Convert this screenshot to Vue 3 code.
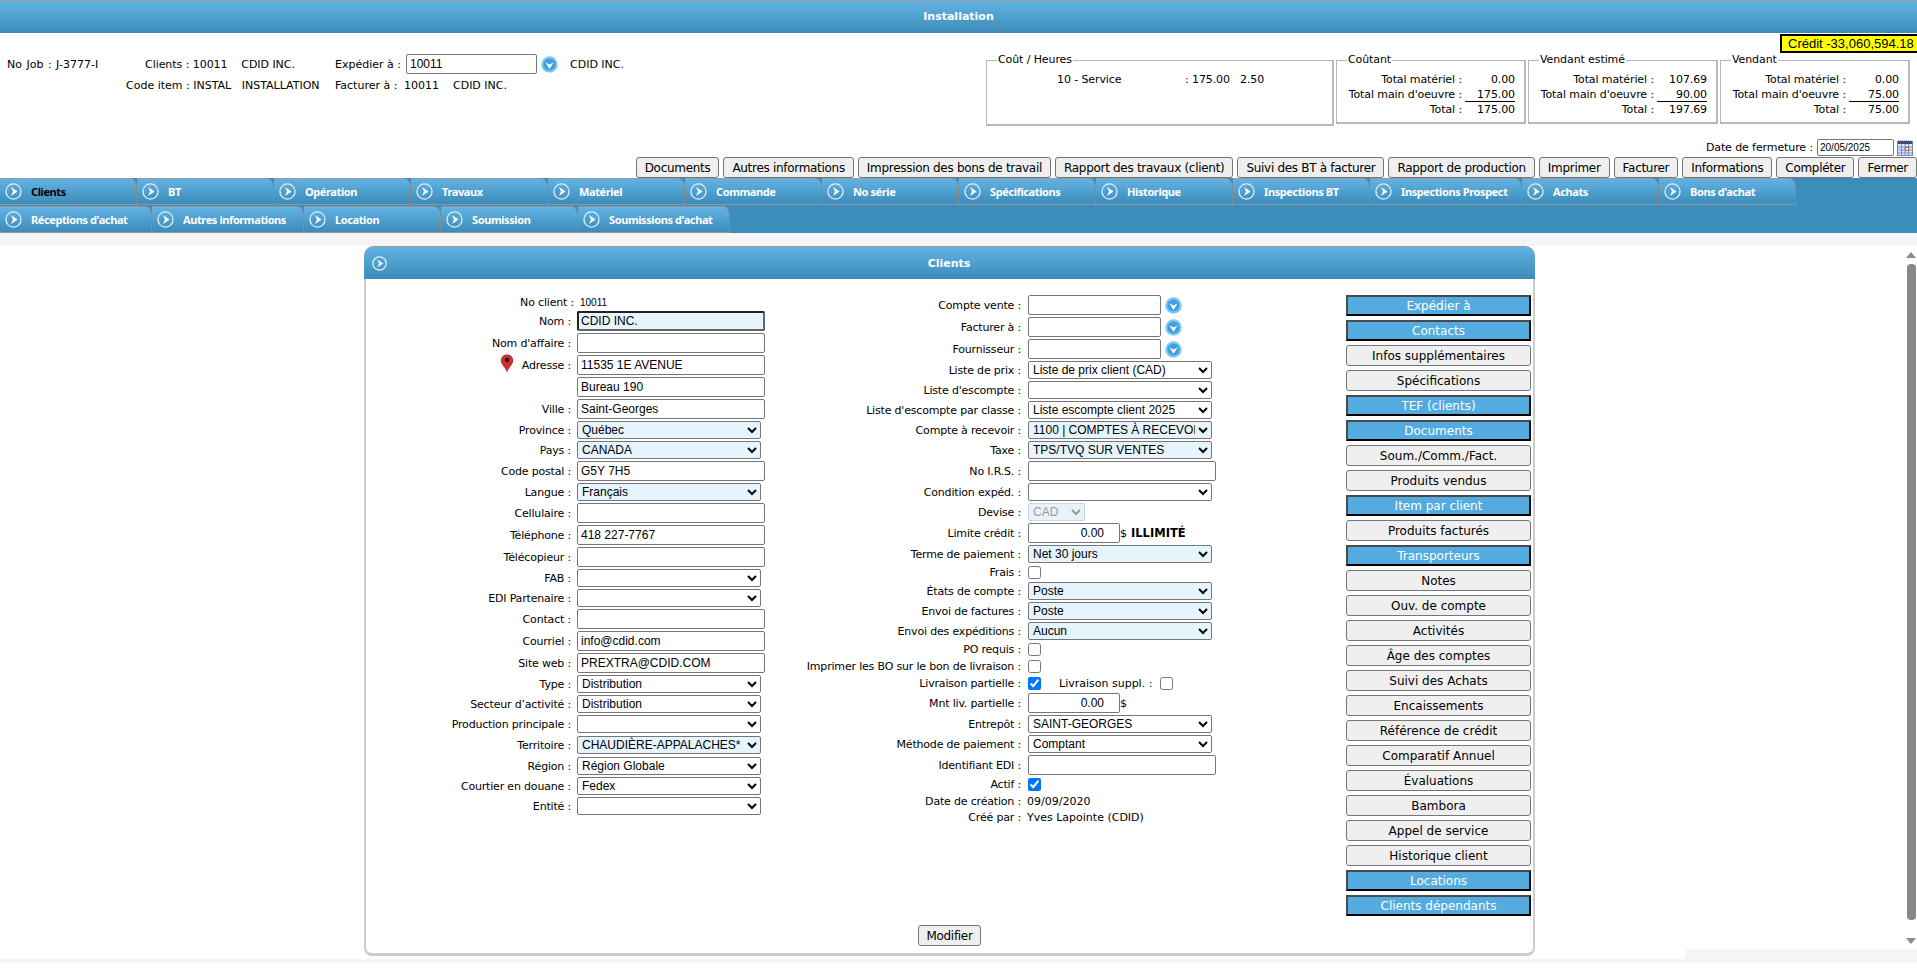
<template>
  <div class="page">
    <header class="top-bar">Installation</header>

    <section class="info">
      <div class="credit">Crédit -33,060,594.18</div>
      <div class="job">
        <span class="no-job">No Job : J-3777-I</span>
        <div class="job-lines">
          <div class="job-line line-a">
            <span class="clients">Clients : 10011 &nbsp;&nbsp; CDID INC.</span>
            <span class="exp-label">Expédier à :</span>
            <input class="field exp-input" value="10011" />
            <svg class="drop-icon" viewBox="0 0 17 17">
              <circle cx="8.5" cy="8.5" r="8.2" fill="#7cc8f0" />
              <circle cx="8.5" cy="8.5" r="6" fill="#3f9edb" />
              <path d="M4.300 6.200 8.500 13 12.700 6.200 8.500 8.400z" fill="#fff" />
            </svg>
            <span class="exp-name">CDID INC.</span>
          </div>
          <div class="job-line line-b">
            <span class="item">Code item : INSTAL &nbsp; INSTALLATION</span>
            <span class="exp-label fact">Facturer à :</span>
            <span>10011 &nbsp;&nbsp; CDID INC.</span>
          </div>
        </div>
      </div>

      <div class="boxes">
        <fieldset class="box hours">
          <legend>Coût / Heures</legend>
          <div class="hours-row">
            <span class="h-name">10 - Service</span>
            <span class="h-rate">: 175.00</span>
            <span>2.50</span>
          </div>
        </fieldset>
        <fieldset v-for="b in totals" :key="b.title" class="box total">
          <legend>{{ b.title }}</legend>
          <div class="t-row"><span class="t-l">Total matériel :</span><span class="t-v">{{ b.mat }}</span></div>
          <div class="t-row"><span class="t-l">Total main d'oeuvre :</span><span class="t-v under">{{ b.work }}</span></div>
          <div class="t-row"><span class="t-l">Total :</span><span class="t-v">{{ b.total }}</span></div>
        </fieldset>
      </div>

      <div class="closing">
        <span>Date de fermeture :</span>
        <input class="field date-input" value="20/05/2025" />
        <svg class="cal" viewBox="0 0 16 16">
          <rect x="0.5" y="1.500" width="15" height="14" fill="#dfe9f7" stroke="#6f86ad" />
          <rect x="1" y="1" width="14" height="3" fill="#3d4f73" />
          <path d="M1 0.500h14" stroke="#9aa5b8" stroke-dasharray="1 1" />
          <path d="M1 7h14M1 10h14M1 13h14M4.500 4v11M8 4v11M11.500 4v11" stroke="#6f93d0" stroke-width="1" />
          <rect x="8.500" y="7.500" width="3" height="3" fill="#fff" stroke="#e2502a" />
        </svg>
      </div>

      <div class="actions">
        <button v-for="a in actions" :key="a" class="act">{{ a }}</button>
      </div>
    </section>

    <nav class="tabs">
      <div v-for="(row, i) in tabRows" :key="i" class="tab-row">
        <div v-for="t in row" :key="t" class="tab" :class="{ active: t === 'Clients', wide: wideTabs.includes(t) }">
          <svg class="go-icon" viewBox="0 0 18 18">
            <circle cx="9" cy="9" r="8" fill="none" stroke="#dceefa" stroke-width="1.400" />
            <path d="M6.300 4.300 13.300 9l-7 4.700L8.500 9z" fill="#fff" />
          </svg>
          <span>{{ t }}</span>
        </div>
      </div>
    </nav>
    <div class="strip"></div>

    <div class="content">
      <section class="panel">
        <div class="panel-head">
          <svg class="go-icon small" viewBox="0 0 18 18">
            <circle cx="9" cy="9" r="8" fill="none" stroke="#dceefa" stroke-width="1.600" />
            <path d="M6.300 4.300 13.300 9l-7 4.700L8.500 9z" fill="#fff" />
          </svg>
          <span class="panel-title">Clients</span>
        </div>

        <div class="panel-body">
          <div class="col left">
            <div v-for="r in leftRows" :key="r.label" class="row" :class="'h-' + r.type">
              <span class="lbl" :class="{ shifted: r.type === 'text' }">
                <svg v-if="r.pin" class="pin" viewBox="0 0 14 20">
                  <path d="M7 0.500C3.300 0.500 0.800 3.200 0.800 6.500 0.800 10.500 5 13 7 18.500 9 13 13.200 10.500 13.200 6.500 13.200 3.200 10.700 0.500 7 0.500z" fill="#c9302c" />
                  <circle cx="7" cy="6" r="2.200" fill="#2a1010" />
                </svg>
                {{ r.label }}
              </span>
              <span v-if="r.type === 'text'" class="small-val">{{ r.value }}</span>
              <input v-else-if="r.type === 'input'" class="field wide" :class="{ req: r.req, focus: r.focus }" :value="r.value" />
              <select v-else class="sel" :class="{ req: r.req }">
                <option>{{ r.value }}</option>
              </select>
            </div>
          </div>

          <div class="col middle">
            <div v-for="r in midRows" :key="r.label" class="row" :class="'h-' + r.type">
              <span class="lbl">{{ r.label }}</span>
              <template v-if="r.type === 'lookup'">
                <input class="field short" />
                <svg class="drop-icon" viewBox="0 0 17 17">
                  <circle cx="8.5" cy="8.5" r="8.2" fill="#7cc8f0" />
                  <circle cx="8.5" cy="8.5" r="6" fill="#3f9edb" />
                  <path d="M4.300 6.200 8.500 13 12.700 6.200 8.500 8.400z" fill="#fff" />
                </svg>
              </template>
              <input v-else-if="r.type === 'input'" class="field mid-wide" :value="r.value" />
              <template v-else-if="r.type === 'money'">
                <input class="field money" :value="r.value" />
                <span class="dollar">$</span>
                <b v-if="r.note" class="note">{{ r.note }}</b>
              </template>
              <select v-else-if="r.type === 'select'" class="sel mid" :class="{ req: r.req }">
                <option>{{ r.value }}</option>
              </select>
              <select v-else-if="r.type === 'disabled'" class="sel devise" disabled>
                <option>{{ r.value }}</option>
              </select>
              <template v-else-if="r.type === 'check'">
                <input type="checkbox" class="cb" :checked="r.checked" />
                <template v-if="r.extra">
                  <span class="extra">{{ r.extra }}</span>
                  <input type="checkbox" class="cb" />
                </template>
              </template>
              <span v-else class="plain">{{ r.value }}</span>
            </div>
          </div>

          <div class="col side">
            <button v-for="s in sideButtons" :key="s.t" class="side-btn" :class="{ on: s.on }">{{ s.t }}</button>
          </div>
        </div>

        <div class="panel-foot">
          <button class="act modify">Modifier</button>
        </div>
      </section>

      <div class="gutter">
        <div class="scroll">
          <span class="arrow up"></span>
          <span class="thumb"></span>
          <span class="arrow down"></span>
        </div>
        <div class="corner"></div>
      </div>
    </div>
    <div class="bottom-strip"></div>
  </div>
</template>

<script setup>
const totals = [
  { title: 'Coûtant', mat: '0.00', work: '175.00', total: '175.00' },
  { title: 'Vendant estimé', mat: '107.69', work: '90.00', total: '197.69' },
  { title: 'Vendant', mat: '0.00', work: '75.00', total: '75.00' },
]

const actions = [
  'Documents',
  'Autres informations',
  'Impression des bons de travail',
  'Rapport des travaux (client)',
  'Suivi des BT à facturer',
  'Rapport de production',
  'Imprimer',
  'Facturer',
  'Informations',
  'Compléter',
  'Fermer',
]

const tabRows = [
  ['Clients', 'BT', 'Opération', 'Travaux', 'Matériel', 'Commande', 'No série', 'Spécifications', 'Historique', 'Inspections BT', 'Inspections Prospect', 'Achats', "Bons d'achat"],
  ["Réceptions d'achat", 'Autres informations', 'Location', 'Soumission', "Soumissions d'achat"],
]
const wideTabs = ['Inspections Prospect', "Réceptions d'achat", 'Autres informations', "Soumissions d'achat"]

const leftRows = [
  { label: 'No client :', type: 'text', value: '10011' },
  { label: 'Nom :', type: 'input', value: 'CDID INC.', req: true, focus: true },
  { label: "Nom d'affaire :", type: 'input', value: '' },
  { label: 'Adresse :', type: 'input', value: '11535 1E AVENUE', pin: true },
  { label: '', type: 'input', value: 'Bureau 190' },
  { label: 'Ville :', type: 'input', value: 'Saint-Georges' },
  { label: 'Province :', type: 'select', value: 'Québec', req: true },
  { label: 'Pays :', type: 'select', value: 'CANADA', req: true },
  { label: 'Code postal :', type: 'input', value: 'G5Y 7H5' },
  { label: 'Langue :', type: 'select', value: 'Français', req: true },
  { label: 'Cellulaire :', type: 'input', value: '' },
  { label: 'Téléphone :', type: 'input', value: '418 227-7767' },
  { label: 'Télécopieur :', type: 'input', value: '' },
  { label: 'FAB :', type: 'select', value: '' },
  { label: 'EDI Partenaire :', type: 'select', value: '' },
  { label: 'Contact :', type: 'input', value: '' },
  { label: 'Courriel :', type: 'input', value: 'info@cdid.com' },
  { label: 'Site web :', type: 'input', value: 'PREXTRA@CDID.COM' },
  { label: 'Type :', type: 'select', value: 'Distribution' },
  { label: 'Secteur d’activité :', type: 'select', value: 'Distribution' },
  { label: 'Production principale :', type: 'select', value: '' },
  { label: 'Territoire :', type: 'select-tall', value: 'CHAUDIÈRE-APPALACHES*', req: true },
  { label: 'Région :', type: 'select', value: 'Région Globale' },
  { label: 'Courtier en douane :', type: 'select', value: 'Fedex' },
  { label: 'Entité :', type: 'select', value: '' },
]

const midRows = [
  { label: 'Compte vente :', type: 'lookup' },
  { label: 'Facturer à :', type: 'lookup' },
  { label: 'Fournisseur :', type: 'lookup' },
  { label: 'Liste de prix :', type: 'select', value: 'Liste de prix client (CAD)' },
  { label: "Liste d'escompte :", type: 'select', value: '' },
  { label: "Liste d'escompte par classe :", type: 'select', value: 'Liste escompte client 2025' },
  { label: 'Compte à recevoir :', type: 'select', value: '1100 | COMPTES À RECEVOIR', req: true },
  { label: 'Taxe :', type: 'select', value: 'TPS/TVQ SUR VENTES', req: true },
  { label: 'No I.R.S. :', type: 'input', value: '' },
  { label: 'Condition expéd. :', type: 'select', value: '' },
  { label: 'Devise :', type: 'disabled', value: 'CAD' },
  { label: 'Limite crédit :', type: 'money', value: '0.00', note: 'ILLIMITÉ' },
  { label: 'Terme de paiement :', type: 'select', value: 'Net 30 jours', req: true },
  { label: 'Frais :', type: 'check' },
  { label: 'États de compte :', type: 'select', value: 'Poste', req: true },
  { label: 'Envoi de factures :', type: 'select', value: 'Poste', req: true },
  { label: 'Envoi des expéditions :', type: 'select', value: 'Aucun', req: true },
  { label: 'PO requis :', type: 'check' },
  { label: 'Imprimer les BO sur le bon de livraison :', type: 'check' },
  { label: 'Livraison partielle :', type: 'check', checked: true, extra: 'Livraison suppl. :' },
  { label: 'Mnt liv. partielle :', type: 'money', value: '0.00' },
  { label: 'Entrepôt :', type: 'select', value: 'SAINT-GEORGES' },
  { label: 'Méthode de paiement :', type: 'select', value: 'Comptant' },
  { label: 'Identifiant EDI :', type: 'input', value: '' },
  { label: 'Actif :', type: 'check', checked: true },
  { label: 'Date de création :', type: 'plain', value: '09/09/2020' },
  { label: 'Créé par :', type: 'plain', value: 'Yves Lapointe (CDID)' },
]

const sideButtons = [
  { t: 'Expédier à', on: true },
  { t: 'Contacts', on: true },
  { t: 'Infos supplémentaires' },
  { t: 'Spécifications' },
  { t: 'TEF (clients)', on: true },
  { t: 'Documents', on: true },
  { t: 'Soum./Comm./Fact.' },
  { t: 'Produits vendus' },
  { t: 'Item par client', on: true },
  { t: 'Produits facturés' },
  { t: 'Transporteurs', on: true },
  { t: 'Notes' },
  { t: 'Ouv. de compte' },
  { t: 'Activités' },
  { t: 'Âge des comptes' },
  { t: 'Suivi des Achats' },
  { t: 'Encaissements' },
  { t: 'Référence de crédit' },
  { t: 'Comparatif Annuel' },
  { t: 'Évaluations' },
  { t: 'Bambora' },
  { t: 'Appel de service' },
  { t: 'Historique client' },
  { t: 'Locations', on: true },
  { t: 'Clients dépendants', on: true },
]
</script>

<style>
html,
body {
  margin: 0;
  background: #fff;
  overflow: hidden;
}
</style>

<style scoped>
* {
  box-sizing: border-box;
}

.page {
  width: 1917px;
  height: 972px;
  overflow: hidden;
  font-family: 'DejaVu Sans', sans-serif;
  font-size: 11px;
  color: #000;
  background: #fff;
}

.top-bar {
  height: 33px;
  border-top: 1px solid #9a9a9a;
  background: linear-gradient(#62b3e4, #3c8bb9);
  color: #fff;
  font-weight: bold;
  font-size: 11px;
  line-height: 32px;
  text-align: center;
}

.info {
  position: relative;
  height: 145px;
  display: flex;
  flex-direction: column;
}
.credit {
  position: absolute;
  top: 1px;
  right: 0;
  width: 137px;
  height: 19px;
  background: #ff0;
  border: 2px solid #000;
  border-right: none;
  font-size: 13px;
  line-height: 15px;
  padding-left: 6px;
  white-space: nowrap;
  overflow: hidden;
  font-family: 'Liberation Sans', sans-serif;
}
.job {
  position: absolute;
  top: 21px;
  left: 7px;
  display: flex;
}
.no-job {
  width: 119px;
  margin-top: 4px;
  word-spacing: 1px;
}
.job-line {
  display: flex;
  align-items: center;
  white-space: nowrap;
}
.line-a {
  height: 20px;
}
.line-b {
  height: 20px;
  margin-top: 1px;
}
.clients {
  margin-left: 19px;
  width: 190px;
  letter-spacing: -0.05px;
}
.item {
  width: 209px;
}
.exp-label {
  width: 71px;
}
.exp-label.fact {
  width: 69px;
}
.exp-input {
  width: 131px;
}
.exp-name {
  margin-left: 12px;
}

.field {
  height: 20px;
  border: 1px solid #767676;
  border-radius: 2px;
  background: #fff;
  padding: 0 3px;
  font-family: 'Liberation Sans', sans-serif;
  font-size: 12px;
  color: #000;
  outline: none;
}
.drop-icon {
  width: 17px;
  height: 17px;
  margin-left: 4px;
  flex: none;
}

.boxes {
  position: absolute;
  top: 20px;
  left: 986px;
  display: flex;
  gap: 2px;
}
.box {
  margin: 0;
  padding: 0;
  min-width: 0;
  border: 1px solid #b8b8b8;
  border-bottom-width: 2px;
  border-right-width: 2px;
  height: 71px;
  position: relative;
  letter-spacing: -0.1px;
}
.box legend {
  padding: 0 1px;
  margin-left: 10px;
  line-height: 14px;
}
.hours {
  width: 348px;
  height: 73px;
}
.hours-row {
  display: flex;
  line-height: 15px;
  margin-top: 5px;
  padding-left: 70px;
}
.h-name {
  width: 128px;
}
.h-rate {
  width: 55px;
}
.total {
  width: 190px;
}
.t-row {
  display: flex;
  justify-content: flex-end;
  height: 15px;
  line-height: 15px;
  padding-right: 9px;
}
.t-row:first-of-type {
  margin-top: 5px;
}
.t-l {
  flex: 1;
  text-align: right;
}
.t-v {
  width: 50px;
  margin-left: 3px;
  text-align: right;
}
.under {
  border-bottom: 1px solid #000;
}

.closing {
  position: absolute;
  top: 106px;
  right: 4px;
  display: flex;
  align-items: center;
  gap: 4px;
  letter-spacing: -0.1px;
}
.date-input {
  width: 77px;
  height: 17px;
  font-size: 10px;
  padding: 0 2px;
}
.cal {
  width: 16px;
  height: 16px;
  margin-left: -1px;
}

.actions {
  position: absolute;
  top: 124px;
  right: 0;
  display: flex;
  gap: 4px;
}
.act {
  height: 21px;
  padding: 0 8px;
  background: #efefef;
  border: 1px solid #767676;
  border-radius: 3px;
  font-family: 'DejaVu Sans', sans-serif;
  font-size: 12px;
  letter-spacing: -0.3px;
  color: #000;
  white-space: nowrap;
}

.tabs {
  background: #3d8dbb;
  height: 55px;
}
.tab-row {
  display: flex;
  height: 27px;
}
.tab-row + .tab-row {
  margin-top: 1px;
}
.tab {
  width: 137px;
  flex: none;
  display: flex;
  align-items: center;
  gap: 9px;
  padding-left: 5px;
  border-top: 1px solid #999;
  border-right: 1px solid #8a8a8a;
  border-bottom: 1px solid #8a9aa5;
  border-top-right-radius: 8px;
  background: linear-gradient(#62b3e4, #3c8bb9);
  color: #fff;
  font-family: 'Noto Sans', sans-serif;
  font-weight: bold;
  font-size: 11px;
  letter-spacing: -0.4px;
  white-space: nowrap;
}
.tab.wide {
  width: 152px;
}
.tab.active {
  color: #000;
}
.go-icon {
  width: 17px;
  height: 17px;
  flex: none;
}
.go-icon.small {
  width: 15px;
  height: 15px;
}

.strip {
  height: 13px;
  background: #f5f5f5;
}

.content {
  display: flex;
  height: 713px;
  padding-left: 364px;
}
.panel {
  width: 1171px;
  height: 710px;
  display: flex;
  flex-direction: column;
  border-left: 2px solid #ccc;
  border-right: 2px solid #ccc;
  border-bottom: 3px solid #ccc;
  border-radius: 10px 10px 8px 8px;
  background: #fff;
}
.panel-head {
  position: relative;
  height: 33px;
  margin: 0 -2px;
  display: flex;
  align-items: center;
  padding-left: 8px;
  border-top: 1px solid #999;
  border-radius: 10px 10px 0 0;
  background: linear-gradient(#62b3e4, #3c8bb9);
}
.panel-title {
  flex: 1;
  text-align: center;
  padding-right: 24px;
  color: #fff;
  font-weight: bold;
  font-size: 11px;
}
.panel-body {
  display: flex;
  height: 646px;
  padding-top: 15px;
}
.col.left {
  width: 404px;
}
.col.middle {
  width: 576px;
}
.col.side {
  width: 185px;
  display: flex;
  flex-direction: column;
  gap: 4px;
  margin-top: 1px;
}
.row {
  display: flex;
  align-items: center;
  white-space: nowrap;
}
.h-text {
  height: 16px;
}
.h-input,
.h-lookup,
.h-money,
.h-select-tall {
  height: 22px;
}
.h-select,
.h-disabled {
  height: 20px;
}
.h-check {
  height: 17px;
}
.h-plain {
  height: 16px;
}
.lbl {
  flex: none;
  text-align: right;
  position: relative;
  letter-spacing: -0.18px;
}
.left .lbl {
  width: 205px;
  margin-right: 6px;
}
.middle .lbl {
  width: 251px;
  margin-right: 7px;
}
.left .lbl.shifted {
  width: 208px;
  margin-right: 6px;
}
.pin {
  position: absolute;
  left: 134px;
  top: -5px;
  width: 14px;
  height: 20px;
}
.small-val {
  font-family: 'Liberation Sans', sans-serif;
  font-size: 10px;
}
.plain {
  margin-left: -1px;
}
.wide {
  width: 188px;
}
.short {
  width: 133px;
}
.mid-wide {
  width: 188px;
}
.money {
  width: 92px;
  text-align: right;
  padding-right: 15px;
}
.dollar {
  margin-left: 0;
}
.note {
  margin-left: 4px;
  font-size: 11.5px;
}
.req {
  background-color: #e6f4fd;
}
.focus {
  border: 2px solid;
  border-color: #222 #666 #666 #222;
  padding: 0 2px;
}
.sel {
  height: 18px;
  width: 184px;
  border: 1px solid #767676;
  border-radius: 2px;
  padding: 0;
  font-family: 'Liberation Sans', sans-serif;
  font-size: 12px;
  color: #000;
  background-color: #fff;
}
.sel.req {
  background-color: #e6f4fd;
}
.sel.devise {
  width: 57px;
  background-color: #eaf2f8;
  border-color: #c9d6de;
  color: #9a9a9a;
  opacity: 1;
}
.cb {
  width: 13px;
  height: 13px;
  margin: 0;
  accent-color: #0075ff;
}
.extra {
  margin-left: 18px;
  margin-right: 8px;
}

.side-btn {
  flex: none;
  height: 21px;
  background: #efefef;
  border: 1px solid #767676;
  border-radius: 3px;
  font-family: 'DejaVu Sans', sans-serif;
  font-size: 12px;
  color: #000;
  padding: 0;
}
.side-btn.on {
  background: #53abe0;
  color: #fff;
  border: 2px solid;
  border-color: #4a4a4a #111 #000 #4a4a4a;
  border-radius: 0;
}

.panel-foot {
  flex: 1;
  display: flex;
  justify-content: center;
  align-items: flex-start;
}
.modify {
  width: 63px;
  padding: 0;
}

.gutter {
  flex: 1;
  display: flex;
  flex-direction: column;
  align-items: flex-end;
}
.scroll {
  width: 12px;
  height: 699px;
  display: flex;
  flex-direction: column;
  align-items: center;
  margin-top: 4px;
  padding: 2px 0;
}
.thumb {
  width: 9px;
  height: 656px;
  margin: 6px 0 18px;
  background: #888;
  border-radius: 4px;
}
.arrow {
  width: 0;
  height: 0;
  flex: none;
  border-left: 5px solid transparent;
  border-right: 5px solid transparent;
}
.arrow.up {
  border-bottom: 6px solid #8a8a8a;
}
.arrow.down {
  border-top: 6px solid #8a8a8a;
}
.corner {
  width: 231px;
  height: 10px;
  background: #f5f5f5;
}

.bottom-strip {
  height: 4px;
  background: #f5f5f5;
}
</style>
